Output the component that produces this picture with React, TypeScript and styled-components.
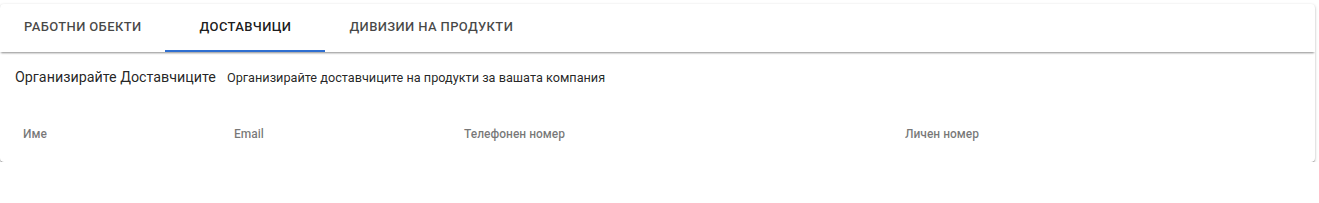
import React from "react";
import styled, { createGlobalStyle } from "styled-components";

const GlobalStyle = createGlobalStyle`
	body {
		margin: 0;
		background: #fff;
		font-family: Roboto, "Noto Sans", sans-serif;
	}
`;

const tabs = ["Работни обекти", "Доставчици", "Дивизии на продукти"];
const columns = [
	{ label: "Име", width: 211 },
	{ label: "Email", width: 230 },
	{ label: "Телефонен номер", width: 441 },
	{ label: "Личен номер", width: 0 },
];

export default function App() {
	return (
		<>
			<GlobalStyle />
			<Page>
				<Card>
					<TabBar>
						{tabs.map((t, i) => (
							<Tab key={t} $active={i === 1}>
								{t}
							</Tab>
						))}
					</TabBar>
					<Heading>
						<Title>Организирайте Доставчиците</Title>
						<Subtitle>Организирайте доставчиците на продукти за вашата компания</Subtitle>
					</Heading>
					<HeaderRow>
						{columns.map((c) => (
							<HeaderCell key={c.label} $width={c.width}>
								{c.label}
							</HeaderCell>
						))}
					</HeaderRow>
				</Card>
			</Page>
		</>
	);
}

const Page = styled.div`
	padding: 4px 4px 0 0;
`;

const Card = styled.div`
	background: #fff;
	border-radius: 4px;
	box-shadow: 0 1px 3px rgba(0, 0, 0, 0.25), 0 1px 1px rgba(0, 0, 0, 0.2),
		0 2px 1px -1px rgba(0, 0, 0, 0.25);
	overflow: hidden;
`;

const TabBar = styled.div`
	display: flex;
	height: 48px;
	box-shadow: 0 2px 2px -1px rgba(0, 0, 0, 0.45);
	position: relative;
	z-index: 1;
`;

const Tab = styled.div<{ $active: boolean }>`
	min-width: 160px;
	padding: 0 24px 2px;
	box-sizing: border-box;
	display: flex;
	align-items: center;
	justify-content: center;
	font-size: 13px;
	font-weight: 500;
	text-transform: uppercase;
	letter-spacing: 0.02857em;
	color: ${(p) => (p.$active ? "rgba(0, 0, 0, 0.9)" : "rgba(0, 0, 0, 0.72)")};
	border-bottom: 2px solid ${(p) => (p.$active ? "#2f6fd1" : "transparent")};
`;

const Heading = styled.div`
	display: flex;
	align-items: baseline;
	gap: 11px;
	padding: 17px 15px 0;
	height: 38px;
	box-sizing: border-box;
`;

const Title = styled.span`
	font-size: 14.3px;
	color: rgba(0, 0, 0, 0.87);
`;

const Subtitle = styled.span`
	font-size: 12.7px;
	color: rgba(0, 0, 0, 0.87);
`;

const HeaderRow = styled.div`
	display: flex;
	align-items: center;
	height: 72px;
	padding: 16px 0 0 23px;
	box-sizing: border-box;
`;

const HeaderCell = styled.div<{ $width: number }>`
	flex: ${(p) => (p.$width ? `0 0 ${p.$width}px` : "1")};
	font-size: 12px;
	font-weight: 500;
	color: rgba(0, 0, 0, 0.54);
`;
